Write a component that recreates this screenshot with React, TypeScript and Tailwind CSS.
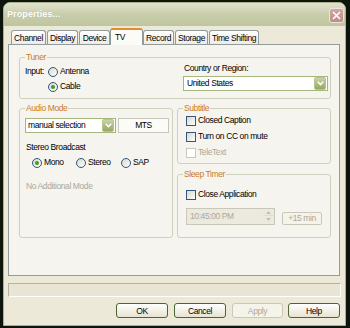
import React from "react";

function Radio({ checked }: { checked?: boolean }) {
  return (
    <span className="w-[10px] h-[10px] rounded-full border border-[#33567a] bg-linear-to-br from-[#d8d7cc] to-white flex items-center justify-center shrink-0">
      {checked && <span className="w-[4px] h-[4px] rounded-full bg-[#3f9a2b]" />}
    </span>
  );
}

function Check({ disabled }: { disabled?: boolean }) {
  return disabled ? (
    <span className="w-[10px] h-[10px] border border-[#cac8bb] bg-white shrink-0" />
  ) : (
    <span className="w-[10px] h-[10px] border border-[#33567a] bg-linear-to-br from-[#d8d7cc] to-white shrink-0" />
  );
}

function Chevron() {
  return (
    <svg width="7" height="5" viewBox="0 0 7 5">
      <path d="M0.8 0.8 L3.5 3.6 L6.2 0.8" fill="none" stroke="white" strokeWidth="1.5" />
    </svg>
  );
}

function DropButton() {
  return (
    <span className="w-[12px] h-[13px] rounded-[2px] bg-linear-to-b from-[#c9d4a6] to-[#95a862] border border-[#b7c48f] flex items-center justify-center shrink-0">
      <Chevron />
    </span>
  );
}

function Group({
  label,
  className,
  children,
}: {
  label: string;
  className: string;
  children?: React.ReactNode;
}) {
  return (
    <div className={"relative border border-[#d0d0bf] rounded-[3px] " + className}>
      <span className="absolute left-[5px] top-[-6px] px-[1px] bg-[#f5f4ef] leading-[10px] text-[#c97c22]">
        {label}
      </span>
      {children}
    </div>
  );
}

const tabs = [
  { label: "Channel", cls: "w-[35px]" },
  { label: "Display", cls: "w-[31px] ml-[1px]" },
  { label: "Device", cls: "w-[31px] ml-[1px]" },
];
const tabs2 = [
  { label: "Record", cls: "w-[31px]" },
  { label: "Storage", cls: "w-[33px] ml-[1px]" },
  { label: "Time Shifting", cls: "w-[50px] ml-[1px]" },
];

function Tab({ label, cls }: { label: string; cls: string }) {
  return (
    <div
      className={
        "h-[14px] border border-b-0 border-[#919b9c] rounded-t-[3px] bg-linear-to-b from-white to-[#ecebe5] flex items-center justify-center leading-[10px] whitespace-nowrap " +
        cls
      }
    >
      {label}
    </div>
  );
}

function Button({ label, cls, disabled }: { label: string; cls: string; disabled?: boolean }) {
  return (
    <div
      className={
        (disabled
          ? "border-[#c9c7ba] text-[#aca899] bg-[#f5f4ea] "
          : "border-[#4d6533] text-black bg-linear-to-b from-white to-[#e6e3d2] ") +
        "h-[15px] border rounded-[3px] flex items-center justify-center leading-[10px] " +
        cls
      }
    >
      {label}
    </div>
  );
}

export default function App() {
  return (
    <div className="w-[350px] h-[328px] bg-[#0d140b] pl-[3px] pt-[2px] overflow-hidden [font-family:'Liberation_Sans',Arial,sans-serif] text-[8.5px] tracking-[-0.4px] leading-none text-black">
      <div className="w-[343px] h-[324px] flex flex-col rounded-t-[7px] overflow-hidden border border-[#a9b08a] bg-[#ece9d8]">
        {/* Title bar */}
        <div className="h-[23px] shrink-0 flex items-center pl-[3px] pr-[1px] bg-linear-to-b from-[#dfe2cd] via-[#c8cdab] to-[#bfc69e]">
          <span className="text-white font-bold text-[9px] tracking-[0.1px] [text-shadow:0_0_1px_#a8ae8c]">
            Properties...
          </span>
          <div className="ml-auto mt-[1px] w-[15px] h-[15px] rounded-[3px] border border-[#ece4e0] bg-linear-to-b from-[#d1a6a2] to-[#bf8c88] flex items-center justify-center">
            <svg width="9" height="9" viewBox="0 0 9 9">
              <path d="M1 1 L8 8 M8 1 L1 8" stroke="white" strokeWidth="1.6" />
            </svg>
          </div>
        </div>

        {/* Tabs */}
        <div className="mt-[2px] h-[16px] flex items-end pl-[7px]">
          {tabs.map((t) => (
            <Tab key={t.label} {...t} />
          ))}
          <div className="relative z-10 -mb-px w-[33px] h-[17px] border border-b-0 border-[#919b9c] border-t-[2px] border-t-[#e68b2c] rounded-t-[3px] bg-[#fbfbf8] pl-[4px] pt-[2px] leading-[10px]">
            TV
          </div>
          {tabs2.map((t) => (
            <Tab key={t.label} {...t} />
          ))}
        </div>

        {/* Panel */}
        <div className="ml-[4px] w-[332px] h-[232px] shrink-0 border border-[#919b9c] bg-[#f5f4ef] pl-[10px] pt-[12px]">
          <Group label="Tuner" className="w-[312px] h-[42px] flex">
            <div className="w-[163px] pl-[5px] pt-[8px] flex flex-col">
              <div className="flex items-center h-[11px]">
                <span className="w-[23px]">Input:</span>
                <Radio />
                <span className="ml-[2px]">Antenna</span>
              </div>
              <div className="mt-[4px] flex items-center h-[11px] pl-[23px]">
                <Radio checked />
                <span className="ml-[2px]">Cable</span>
              </div>
            </div>
            <div className="pt-[5px] flex flex-col">
              <span className="leading-[10px] pl-[1px]">Country or Region:</span>
              <div className="mt-[3px] w-[145px] h-[15px] border border-[#a5b77f] bg-white flex items-center pl-[3px] pr-[1px]">
                <span>United States</span>
                <span className="ml-auto">
                  <DropButton />
                </span>
              </div>
            </div>
          </Group>

          <div className="mt-[9px] flex">
            <Group label="Audio Mode" className="w-[154px] h-[130px] pl-[5px] pt-[9px] flex flex-col">
              <div className="flex">
                <div className="w-[91px] h-[15px] border border-[#a5b77f] bg-white flex items-center pl-[2px] pr-[1px]">
                  <span>manual selection</span>
                  <span className="ml-auto">
                    <DropButton />
                  </span>
                </div>
                <div className="ml-[2px] w-[51px] h-[15px] border border-[#c9c7ba] bg-[#fbfbf8] flex items-center justify-center">
                  MTS
                </div>
              </div>
              <span className="mt-[9px] ml-[1px] leading-[10px]">Stereo Broadcast</span>
              <div className="mt-[5px] ml-[7px] flex items-center h-[11px]">
                <div className="w-[44px] flex items-center">
                  <Radio checked />
                  <span className="ml-[2px]">Mono</span>
                </div>
                <div className="w-[45px] flex items-center">
                  <Radio />
                  <span className="ml-[2px]">Stereo</span>
                </div>
                <div className="flex items-center">
                  <Radio />
                  <span className="ml-[2px]">SAP</span>
                </div>
              </div>
              <span className="mt-[13px] ml-[1px] leading-[10px] text-[#aca899]">No Additional Mode</span>
            </Group>

            <div className="ml-[4px] w-[154px] flex flex-col">
              <Group label="Subtitle" className="h-[56px] pl-[8px] pt-[6px] flex flex-col">
                <div className="flex items-center h-[11px]">
                  <Check />
                  <span className="ml-[2px]">Closed Caption</span>
                </div>
                <div className="mt-[5px] flex items-center h-[11px]">
                  <Check />
                  <span className="ml-[2px]">Turn on CC on mute</span>
                </div>
                <div className="mt-[5px] flex items-center h-[11px]">
                  <Check disabled />
                  <span className="ml-[2px] text-[#aca899]">TeleText</span>
                </div>
              </Group>
              <Group label="Sleep Timer" className="mt-[10px] h-[64px] pl-[8px] pt-[14px] flex flex-col">
                <div className="flex items-center h-[11px]">
                  <Check />
                  <span className="ml-[2px]">Close Application</span>
                </div>
                <div className="mt-[8px] flex items-end">
                  <div className="w-[89px] h-[17px] border border-[#c9c7ba] bg-[#eceadf] flex items-center pl-[3px] pr-[1px] text-[#aca899]">
                    <span>10:45:00 PM</span>
                    <div className="ml-auto w-[10px] h-[13px] flex flex-col">
                      <div className="h-[6px] flex items-center justify-center border-b border-[#e0ded2]">
                        <svg width="5" height="3" viewBox="0 0 5 3">
                          <path d="M0 3 L2.5 0 L5 3 Z" fill="#c2c0b2" />
                        </svg>
                      </div>
                      <div className="h-[7px] flex items-center justify-center">
                        <svg width="5" height="3" viewBox="0 0 5 3">
                          <path d="M0 0 L2.5 3 L5 0 Z" fill="#c2c0b2" />
                        </svg>
                      </div>
                    </div>
                  </div>
                  <div className="ml-[7px] w-[40px] h-[13px] border border-[#c9c7ba] rounded-[2px] bg-[#f5f4ea] text-[#aca899] flex items-center justify-center">
                    +15 min
                  </div>
                </div>
              </Group>
            </div>
          </div>
        </div>

        {/* Sunken status field */}
        <div className="mt-[7px] ml-[4px] w-[333px] h-[14px] shrink-0 border-t border-l border-[#b4b19e] border-b border-r border-b-white border-r-white bg-[#e8e5d4]" />

        {/* Buttons */}
        <div className="mt-[6px] flex pl-[112px]">
          <Button label="OK" cls="w-[52px]" />
          <Button label="Cancel" cls="w-[52px] ml-[6px]" />
          <Button label="Apply" cls="w-[51px] ml-[6px]" disabled />
          <Button label="Help" cls="w-[52px] ml-[5px]" />
        </div>
      </div>
    </div>
  );
}
